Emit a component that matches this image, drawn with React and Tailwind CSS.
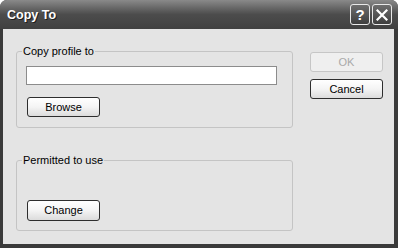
export default function App() {
  const font = { fontFamily: '"Liberation Sans", Arial, sans-serif' };
  const btn =
    "h-[20px] w-[73px] rounded-[3px] border border-[#2e2e2e] bg-gradient-to-b from-[#ffffff] via-[#f4f4f4] to-[#dcdcdc] text-[11px] leading-none text-black flex items-center justify-center";
  return (
    <div
      className="w-[398px] h-[248px] bg-[#3a3a3a] flex flex-col rounded-t-[7px] overflow-hidden"
      style={font}
    >
      {/* Title bar */}
      <div className="h-[29px] shrink-0 flex items-center bg-gradient-to-b from-[#8a8a8a] via-[#4c4c4c] to-[#404040] pl-[7px] pr-[6px]">
        <div className="flex-1 text-white font-bold text-[12.5px] leading-none [text-shadow:1px_1px_0_#1e1e1e] pt-[1px]">
          Copy To
        </div>
        <div className="flex gap-[2px] items-center">
          <div className="w-[20px] h-[21px] rounded-[3px] border border-[#e8e8e8] bg-gradient-to-b from-[#6e6e6e] to-[#3e3e3e] flex items-center justify-center text-white font-bold text-[15px] leading-none">
            ?
          </div>
          <div className="w-[20px] h-[21px] rounded-[3px] border border-[#e8e8e8] bg-gradient-to-b from-[#6e6e6e] to-[#3e3e3e] flex items-center justify-center">
            <svg width="12" height="12" viewBox="0 0 12 12">
              <path d="M1.5 1.5 L10.5 10.5 M10.5 1.5 L1.5 10.5" stroke="#ffffff" strokeWidth="2.2" strokeLinecap="square" />
            </svg>
          </div>
        </div>
      </div>
      {/* Body */}
      <div className="flex-1 ml-[3px] mr-[4px] mb-[4px] bg-[#e4e4e4] flex items-start pl-[13px] pt-[16px] text-[11px] text-black">
        <div className="flex flex-col w-[277px]">
          <fieldset className="border border-[#c4c4c4] rounded-[3px] p-0 m-0">
            <legend className="ml-[5px] px-[1px] leading-[13px] text-[11px]">Copy profile to</legend>
            <div className="pl-[9px] pt-[8px] pb-[10px] flex flex-col items-start">
              <div className="w-[251px] h-[19px] bg-white border border-[#8c8c8c]" />
              <button className={btn + " mt-[12px] ml-[1px]"}>Browse</button>
            </div>
          </fieldset>
          <fieldset className="border border-[#c4c4c4] rounded-[3px] p-0 m-0 mt-[26px]">
            <legend className="ml-[5px] px-[1px] leading-[13px] text-[11px]">Permitted to use</legend>
            <div className="pl-[10px] pt-[33px] pb-[9px] flex flex-col items-start">
              <button className={btn + " h-[21px]"}>Change</button>
            </div>
          </fieldset>
        </div>
        <div className="ml-[17px] mt-[7px] flex flex-col gap-[7px]">
          <button className="h-[20px] w-[73px] rounded-[3px] border border-[#c6c6c6] bg-[#efefef] text-[11px] leading-none text-[#a9a9a9] flex items-center justify-center">
            OK
          </button>
          <button className={btn}>Cancel</button>
        </div>
      </div>
    </div>
  );
}
